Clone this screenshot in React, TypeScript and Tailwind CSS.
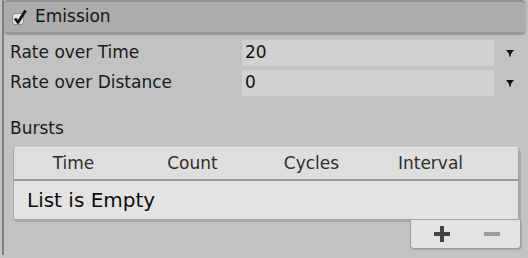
import React from "react";

const Dropdown = ({ value }: { value: string }) => (
  <div className="flex items-center">
    <div className="w-[252px] h-[26px] bg-[#d1d1d1] flex items-center pl-[3px] text-[17px] text-[#111]">{value}</div>
    <svg width="10" height="10" viewBox="0 0 10 10" className="ml-[11px]">
      <path d="M1 2 H9 L5 7 Z" fill="#111" />
      <rect x="4.2" y="5" width="1.6" height="3.5" fill="#111" />
    </svg>
  </div>
);

const Row = ({ label, value }: { label: string; value: string }) => (
  <div className="flex items-center h-[26px]">
    <div className="w-[238px] pl-[6px] text-[17px] text-[#1a1a1a]">{label}</div>
    <Dropdown value={value} />
  </div>
);

const columns = ["Time", "Count", "Cycles", "Interval"];

export default function App() {
  return (
    <div className="w-[528px] h-[258px] bg-[#c2c2c2] pl-[2px] overflow-hidden" style={{ fontFamily: '"DejaVu Sans", Verdana, sans-serif' }}>
      <div className="h-[255px] border-l-2 border-[#7e7e7e] flex flex-col">
        {/* module header */}
        <div className="h-[35px] mr-[3px] bg-[#acacac] rounded-[4px] border-t-2 border-[#8f8f8f] border-b-[3px] border-b-[#999] flex items-center pl-[4px] shadow-[2px_0_0_#b5b5b5]">
          <div className="relative w-[22px] h-[22px] shrink-0">
            <div className="absolute left-[4px] top-[7px] w-[12px] h-[12px] rounded-[3px] bg-[#e4e4e4] border border-[#8a8a8a]" />
            <svg width="22" height="22" viewBox="0 0 22 22" className="absolute left-0 top-0">
              <path d="M7 12.5 L10 16.5 L17.5 4.5" fill="none" stroke="#111" strokeWidth="2.8" strokeLinejoin="round" />
            </svg>
          </div>
          <span className="ml-[5px] text-[17px] text-[#151515]">Emission</span>
        </div>

        <div className="flex flex-col gap-[4px] pt-[5px]">
          <Row label="Rate over Time" value="20" />
          <Row label="Rate over Distance" value="0" />
        </div>

        <div className="pl-[6px] mt-[21px] text-[17px] text-[#1a1a1a] leading-[22px]">Bursts</div>

        {/* bursts list */}
        <div className="ml-[9px] mr-[9px] mt-[8px] flex flex-col">
          <div className="bg-[#e3e3e3] rounded-t-[4px] border border-[#a6a6a6] border-t-[#efefef] shadow-[2px_2px_0_#a9a9a9]">
            <div className="h-[33px] bg-[#dedede] rounded-t-[4px] grid grid-cols-[119px_119px_119px_119px] text-[17px] text-[#2e2e2e] items-center border-b-2 border-[#9c9c9c]">
              {columns.map((c) => (
                <div key={c} className="text-center">{c}</div>
              ))}
            </div>
            <div className="h-[38px] flex items-center pl-[13px] text-[20px] text-[#0d0d0d]">List is Empty</div>
          </div>
          <div className="flex justify-end">
            <div className="w-[111px] h-[29px] mr-[-2px] bg-[#e3e3e3] border border-t-0 border-[#9d9d9d] rounded-b-[4px] shadow-[1px_1px_0_#a9a9a9] flex items-center">
              <svg width="16" height="16" viewBox="0 0 16 16" className="ml-[23px]">
                <rect x="0" y="6" width="16" height="4" fill="#444" />
                <rect x="6" y="0" width="4" height="16" fill="#444" />
              </svg>
              <svg width="16" height="4" viewBox="0 0 16 4" className="ml-[34px]">
                <rect x="0" y="0" width="16" height="4" fill="#9c9c9c" />
              </svg>
            </div>
          </div>
        </div>
      </div>
    </div>
  );
}
